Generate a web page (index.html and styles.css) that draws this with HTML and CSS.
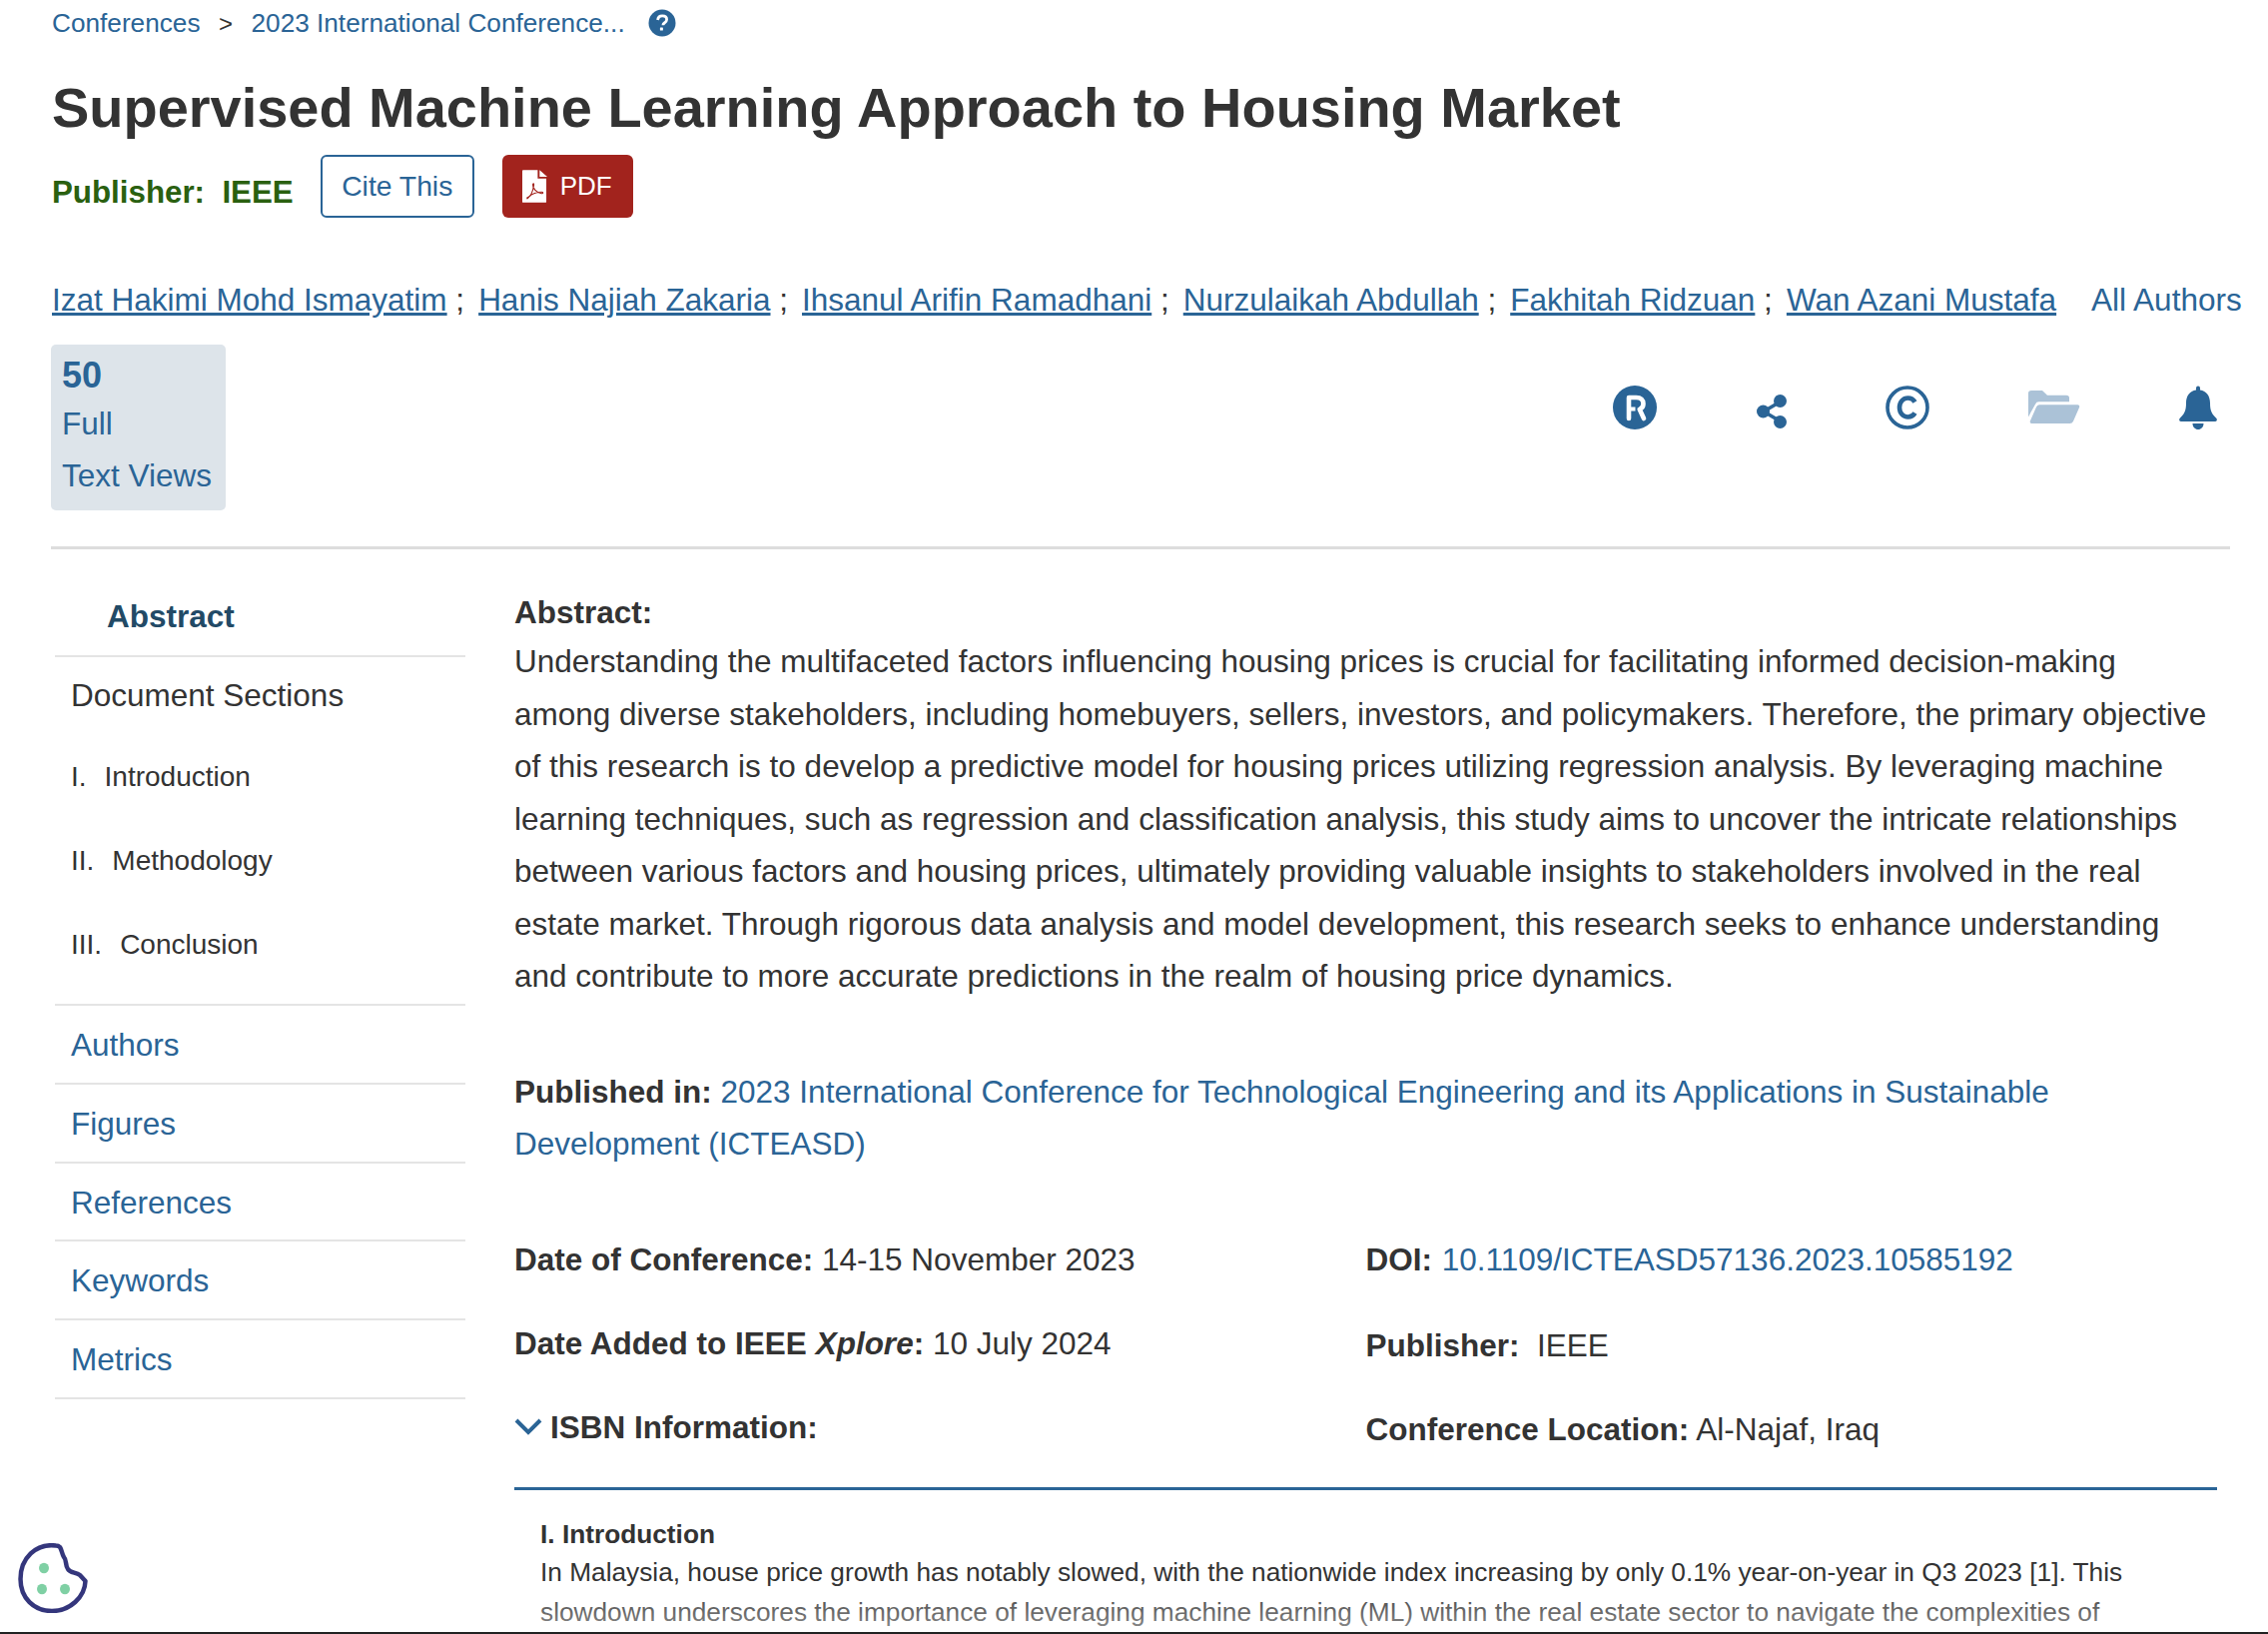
FILE: index.html
```html
<!DOCTYPE html>
<html lang="en">

<head>
    <meta charset="UTF-8" />
    <title>Supervised Machine Learning Approach to Housing Market</title>
    <link rel="stylesheet" href="styles.css">
</head>

<body>
    <div class="page">
        <div class="breadcrumb">
            <a href="#">Conferences</a>
            <span class="sep">&gt;</span>
            <a href="#">2023 International Conference...</a>
            <svg class="help" viewBox="0 0 28 28">
                <circle cx="14" cy="14" r="13.5" fill="#2a6496" />
                <path d="M9.600 11c.3-2.800 2.200-4.200 4.600-4.200 2.600 0 4.400 1.500 4.400 3.700 0 1.900-1.100 2.700-2.300 3.500-1 .7-1.400 1.100-1.400 2.300" fill="none" stroke="#fff" stroke-width="2.800" />
                <rect x="11.900" y="18.600" width="3" height="3" rx=".5" fill="#fff" />
            </svg>
        </div>

        <h1>Supervised Machine Learning Approach to Housing Market</h1>

        <div class="publisher-row">
            <span class="publisher">Publisher:&nbsp; IEEE</span>
            <a class="btn-cite" href="#">Cite This</a>
            <a class="btn-pdf" href="#">
                <svg class="pdf-icon" viewBox="0 0 26 34">
                    <path d="M1 0h15v9h9v24a1 1 0 0 1-1 1H1a1 1 0 0 1-1-1V1a1 1 0 0 1 1-1z" fill="#fff" />
                    <path d="M18 0l8 7h-8z" fill="#fff" />
                    <path d="M5 29c3-1 6-6 7-13 .3-2-.8-2.500-1-.5-.2 3 3 8 9 9 2 .3 2-1.500 0-1.500-5 0-10 2-13 5-2 2-2 2.500-2 1z" fill="none" stroke="#a2231d" stroke-width="1.200" />
                </svg>
                PDF
            </a>
        </div>

        <div class="authors">
            <span><a href="#">Izat Hakimi Mohd Ismayatim</a> ;</span>
            <span><a href="#">Hanis Najiah Zakaria</a> ;</span>
            <span><a href="#">Ihsanul Arifin Ramadhani</a> ;</span>
            <span><a href="#">Nurzulaikah Abdullah</a> ;</span>
            <span><a href="#">Fakhitah Ridzuan</a> ;</span>
            <span><a href="#">Wan Azani Mustafa</a></span>
            <span class="all-authors">All Authors</span>
        </div>

        <div class="metrics-row">
            <div class="views-card">
                <div class="views-num">50</div>
                <div>Full</div>
                <div>Text Views</div>
            </div>
            <div class="tools">
                <svg class="tool tool-r" viewBox="0 0 44 44">
                    <circle cx="22" cy="22" r="22" fill="#2a6496" />
                    <path d="M16 33V12h7.500c4.500 0 7 2.500 7 6.200 0 2.800-1.500 4.800-3.800 5.600L31 33" fill="none" stroke="#fff" stroke-width="4.600" stroke-linejoin="round" stroke-linecap="round" />
                    <path d="M16.500 23.500h6" stroke="#fff" stroke-width="4" />
                </svg>
                <svg class="tool tool-share" viewBox="0 0 30 34">
                    <path d="M24 7L7 17l17 10" fill="none" stroke="#2a6496" stroke-width="3.600" />
                    <circle cx="23.500" cy="6.500" r="6.500" fill="#2a6496" />
                    <circle cx="6.500" cy="17" r="6.500" fill="#2a6496" />
                    <circle cx="23.500" cy="27.500" r="6.500" fill="#2a6496" />
                </svg>
                <svg class="tool tool-c" viewBox="0 0 44 44">
                    <circle cx="22" cy="22" r="20" fill="none" stroke="#2a6496" stroke-width="3.600" />
                    <path d="M29.500 16.500c-1.500-2.600-4-4-7-4-5 0-8.500 4-8.500 9.500s3.500 9.500 8.500 9.500c3 0 5.500-1.400 7-4" fill="none" stroke="#2a6496" stroke-width="4.600" />
                </svg>
                <svg class="tool tool-folder" viewBox="0 0 52 36" preserveAspectRatio="none">
                    <path d="M0 28V3a3 3 0 0 1 3-3h11l5 5h19a3 3 0 0 1 3 3v4H11a4 4 0 0 0-4 2.500z" fill="#abc2d7" />
                    <path d="M11 15h38a2 2 0 0 1 2 3l-6 14.500a4 4 0 0 1-3.500 2.500H4a2 2 0 0 1-2-3l6-14.500a4 4 0 0 1 3-2.500z" fill="#abc2d7" />
                </svg>
                <svg class="tool tool-bell" viewBox="0 0 40 44">
                    <path d="M18 2.500a2 2 0 0 1 4 0v2c6.500 1 10 6 10 13 0 8 1.800 11 6.500 15.500.8 1.500.3 3-1.500 3H3c-1.800 0-2.300-1.500-1.500-3C6.200 28.500 8 25.500 8 17.500c0-7 3.500-12 10-13z" fill="#2a6496" />
                    <path d="M14.500 38h11c0 3.500-2.500 6-5.500 6s-5.500-2.500-5.500-6z" fill="#2a6496" />
                </svg>
            </div>
        </div>

        <hr class="divider" />

        <div class="content">
            <aside class="sidebar">
                <div class="side-abstract">Abstract</div>
                <div class="side-sections">
                    <div class="side-title">Document Sections</div>
                    <div class="side-sub"><span class="num">I.</span>Introduction</div>
                    <div class="side-sub"><span class="num">II.</span>Methodology</div>
                    <div class="side-sub"><span class="num">III.</span>Conclusion</div>
                </div>
                <a class="side-link" href="#">Authors</a>
                <a class="side-link" href="#">Figures</a>
                <a class="side-link" href="#">References</a>
                <a class="side-link" href="#">Keywords</a>
                <a class="side-link" href="#">Metrics</a>
            </aside>

            <main class="main">
                <div class="abstract-head">Abstract:</div>
                <p class="abstract-text">Understanding the multifaceted factors influencing housing prices is crucial for facilitating informed decision-making among diverse stakeholders, including homebuyers, sellers, investors, and policymakers. Therefore, the primary objective of this research is to develop a predictive model for housing prices utilizing regression analysis. By leveraging machine learning techniques, such as regression and classification analysis, this study aims to uncover the intricate relationships between various factors and housing prices, ultimately providing valuable insights to stakeholders involved in the real estate market. Through rigorous data analysis and model development, this research seeks to enhance understanding and contribute to more accurate predictions in the realm of housing price dynamics.</p>

                <p class="published"><b>Published in:</b> <a href="#">2023 International Conference for Technological Engineering and its Applications in Sustainable Development (ICTEASD)</a></p>

                <div class="meta">
                    <div class="meta-col">
                        <div class="meta-item"><b>Date of Conference:</b> 14-15 November 2023</div>
                        <div class="meta-item"><b>Date Added to IEEE <i>Xplore</i>:</b> 10 July 2024</div>
                        <div class="meta-item isbn">
                            <svg class="chevron" viewBox="0 0 28 18">
                                <path d="M2 3l12 12L26 3" fill="none" stroke="#2a6496" stroke-width="4" />
                            </svg>
                            <b>ISBN Information:</b>
                        </div>
                    </div>
                    <div class="meta-col meta-right">
                        <div class="meta-item"><b>DOI:</b> <a href="#">10.1109/ICTEASD57136.2023.10585192</a></div>
                        <div class="meta-item"><b>Publisher:</b>&nbsp; IEEE</div>
                        <div class="meta-item"><b>Conference Location:</b> Al-Najaf, Iraq</div>
                    </div>
                </div>

                <div class="article">
                    <div class="article-head">I. Introduction</div>
                    <p>In Malaysia, house price growth has notably slowed, with the nationwide index increasing by only 0.1% year-on-year in Q3 2023 [1]. This slowdown underscores the importance of leveraging machine learning (ML) within the real estate sector to navigate the complexities of</p>
                </div>
            </main>
        </div>

        <div class="fade"></div>

        <svg class="cookie" viewBox="0 0 70 70">
            <path d="M38 2.500C18 0 2.500 15 2.500 36c0 19 13.500 32 31.500 32 18 0 33-14 33.500-30l-5.500-6c-4-3-10-2-12-6-3-4-1-9-4-12-2-3-2-7-4-10-1-1-2-1.500-4-1.500z" fill="#fff" stroke="#34367c" stroke-width="4.500" stroke-linejoin="round" />
            <ellipse cx="26" cy="25" rx="5" ry="5.200" fill="#7fd0a4" />
            <ellipse cx="24" cy="46" rx="5" ry="5.200" fill="#7fd0a4" />
            <ellipse cx="47" cy="46" rx="5" ry="5.200" fill="#7fd0a4" />
        </svg>
    </div>
</body>

</html>
```

FILE: styles.css
```css
* {
    box-sizing: border-box;
    margin: 0;
    padding: 0;
}

html,
body {
    height: 1636px;
    overflow: hidden;
    background: #fff;
}

body {
    font-family: 'Liberation Sans', Arial, sans-serif;
    color: #333;
}

a {
    color: #2a6496;
    text-decoration: none;
}

.page {
    position: relative;
    height: 1636px;
    padding-left: 52px;
    border-bottom: 2px solid #222;
    overflow: hidden;
}

.breadcrumb {
    display: flex;
    align-items: center;
    gap: 18.500px;
    height: 47px;
    font-size: 26.200px;
}

.breadcrumb .sep {
    font-size: 24px;
}

.help {
    width: 28px;
    height: 28px;
    margin: -2px 0 0 5px;
}

h1 {
    margin-top: 27px;
    font-size: 55.950px;
    line-height: 68px;
    font-weight: bold;
    color: #333;
}

.publisher-row {
    display: flex;
    align-items: center;
    margin-top: 12px;
    height: 64px;
}

.publisher {
    font-size: 31.300px;
    font-weight: bold;
    color: #2a6010;
    margin: 14px 27px 0 0;
}

.btn-cite {
    display: flex;
    align-items: center;
    justify-content: center;
    width: 154px;
    height: 63px;
    border: 2px solid #2a6496;
    border-radius: 6px;
    font-size: 28.300px;
}

.btn-pdf {
    display: flex;
    align-items: center;
    gap: 13px;
    width: 131px;
    height: 63px;
    padding-left: 20px;
    margin-left: 28px;
    background: #a2231d;
    border-radius: 6px;
    color: #fff;
    font-size: 26px;
}

.pdf-icon {
    width: 25px;
    height: 33px;
}

.authors {
    display: flex;
    margin-top: 60px;
    font-size: 31.500px;
    line-height: 44px;
    white-space: nowrap;
}

.authors span {
    margin-right: 14px;
}

.authors a {
    text-decoration: underline;
}

.authors .all-authors {
    color: #2a6496;
    margin: 0 0 0 21px;
}

.metrics-row {
    display: flex;
    justify-content: space-between;
    margin: 23px 0 0 -1px;
}

.views-card {
    width: 175px;
    height: 166px;
    padding: 9px 11px;
    background: #dde4ea;
    border-radius: 5px;
    color: #2a6496;
    font-size: 31.500px;
    line-height: 52px;
}

.views-num {
    font-size: 36px;
    font-weight: bold;
    line-height: 44px;
}

.tools {
    display: flex;
    align-items: center;
    height: 126px;
    padding-right: 50px;
}

.tool {
    display: block;
}

.tool-r {
    width: 44px;
    height: 44px;
}

.tool-share {
    width: 30px;
    height: 34px;
    margin: 7px 0 0 100px;
}

.tool-c {
    width: 44px;
    height: 44px;
    margin-left: 99px;
}

.tool-folder {
    width: 52px;
    height: 34px;
    margin-left: 99px;
}

.tool-bell {
    width: 40px;
    height: 44px;
    margin-left: 98px;
}

.divider {
    width: 2182px;
    height: 3px;
    margin: 36px 0 0 -1px;
    border: 0;
    background: #ddd;
}

.content {
    display: flex;
    align-items: flex-start;
    margin-top: 41px;
}

.sidebar {
    width: 411px;
    margin: -2px 0 0 3px;
    font-size: 31.500px;
}

.side-abstract {
    height: 68.500px;
    padding: 5.500px 0 0 52px;
    border-bottom: 2px solid #e4e4e4;
    font-weight: bold;
    color: #224a66;
    line-height: 44px;
}

.side-sections {
    height: 349.500px;
    border-bottom: 2px solid #e4e4e4;
}

.side-title {
    padding: 16.500px 0 0 16px;
    line-height: 44px;
    height: 86.500px;
}

.side-sub {
    display: flex;
    padding-left: 16px;
    height: 84px;
    font-size: 28px;
    line-height: 68px;
}

.side-sub .num {
    margin-right: 18px;
}

.side-link {
    display: block;
    height: 78.800px;
    padding: 17px 0 0 16px;
    border-bottom: 2px solid #e4e4e4;
    line-height: 44px;
}

.main {
    width: 1705px;
    margin-left: 49px;
}

.abstract-head {
    font-size: 31.500px;
    font-weight: bold;
    line-height: 44px;
}

.abstract-text {
    margin-top: 1px;
    font-size: 31.500px;
    line-height: 52.500px;
}

.published {
    margin-top: 63px;
    font-size: 31.500px;
    line-height: 52.500px;
}

.meta {
    display: flex;
    margin-top: 63px;
    font-size: 31.500px;
}

.meta-col {
    width: 853px;
}

.meta-right .meta-item:nth-child(n+2) {
    padding-top: 2px;
}

.meta-right a {
    margin-left: 1px;
}

.meta-item {
    height: 84px;
    line-height: 52px;
}

.isbn {
    display: flex;
    align-items: flex-start;
    gap: 8px;
}

.chevron {
    width: 28px;
    height: 18px;
    margin-top: 16px;
}

.article {
    border-top: 3px solid #2a6496;
    margin-top: 2.500px;
    padding: 25.500px 0 0 26px;
    font-size: 26.250px;
    line-height: 40px;
    color: #333;
}

.article-head {
    font-weight: bold;
    color: #333;
    line-height: 36px;
}

.fade {
    position: absolute;
    left: 0;
    right: 0;
    bottom: 0;
    height: 50px;
    background: linear-gradient(to bottom, rgba(255, 255, 255, 0), rgba(255, 255, 255, 0.45));
}

.cookie {
    position: absolute;
    left: 18px;
    top: 1545px;
    width: 70px;
    height: 70px;
}
```
